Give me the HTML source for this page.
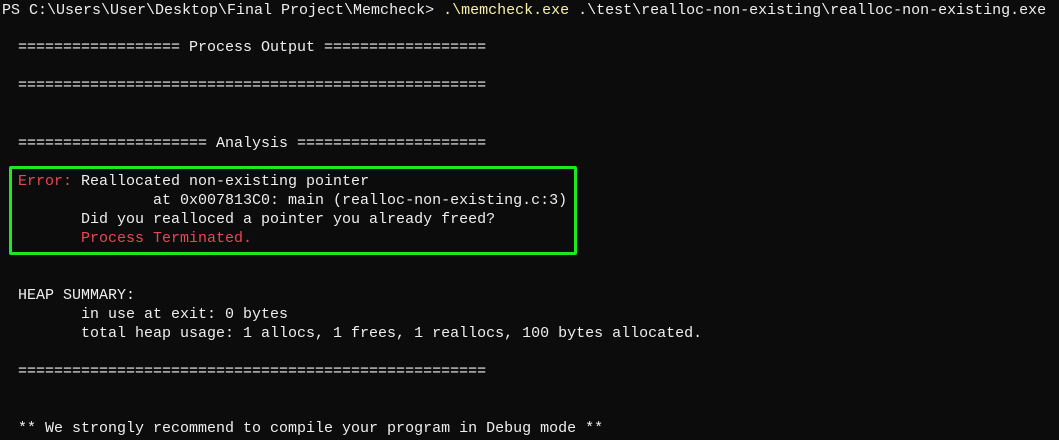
<!DOCTYPE html>
<html><head><meta charset="utf-8"><style>
html,body{margin:0;padding:0;background:#0c0c0c;width:1059px;height:440px;overflow:hidden}
.l{position:absolute;white-space:pre;font-family:"Liberation Mono",monospace;font-size:15px;line-height:20px;color:#eeeeee}
.y{color:#f9f1a5}.r{color:#e74856}
.box{position:absolute;left:9px;top:166px;width:562px;height:83px;border:3px solid #1ee81e;border-radius:2px}
</style></head><body>
<div class="l" style="left:2px;top:1px">PS C:\Users\User\Desktop\Final Project\Memcheck&gt; <span class="y">.\memcheck.exe</span> .\test\realloc-non-existing\realloc-non-existing.exe</div>
<div class="l" style="left:18px;top:38px">================== Process Output ==================</div>
<div class="l" style="left:18px;top:76px">====================================================</div>
<div class="l" style="left:18px;top:134px">===================== Analysis =====================</div>
<div class="box"></div>
<div class="l" style="left:18px;top:172px"><span class="r">Error:</span> Reallocated non-existing pointer</div>
<div class="l" style="left:18px;top:191px">               at 0x007813C0: main (realloc-non-existing.c:3)</div>
<div class="l" style="left:18px;top:210px">       Did you realloced a pointer you already freed?</div>
<div class="l" style="left:18px;top:229px">       <span class="r">Process Terminated.</span></div>
<div class="l" style="left:18px;top:286px">HEAP SUMMARY:</div>
<div class="l" style="left:18px;top:305px">       in use at exit: 0 bytes</div>
<div class="l" style="left:18px;top:324px">       total heap usage: 1 allocs, 1 frees, 1 reallocs, 100 bytes allocated.</div>
<div class="l" style="left:18px;top:362px">====================================================</div>
<div class="l" style="left:18px;top:419px">** We strongly recommend to compile your program in Debug mode **</div>
</body></html>
